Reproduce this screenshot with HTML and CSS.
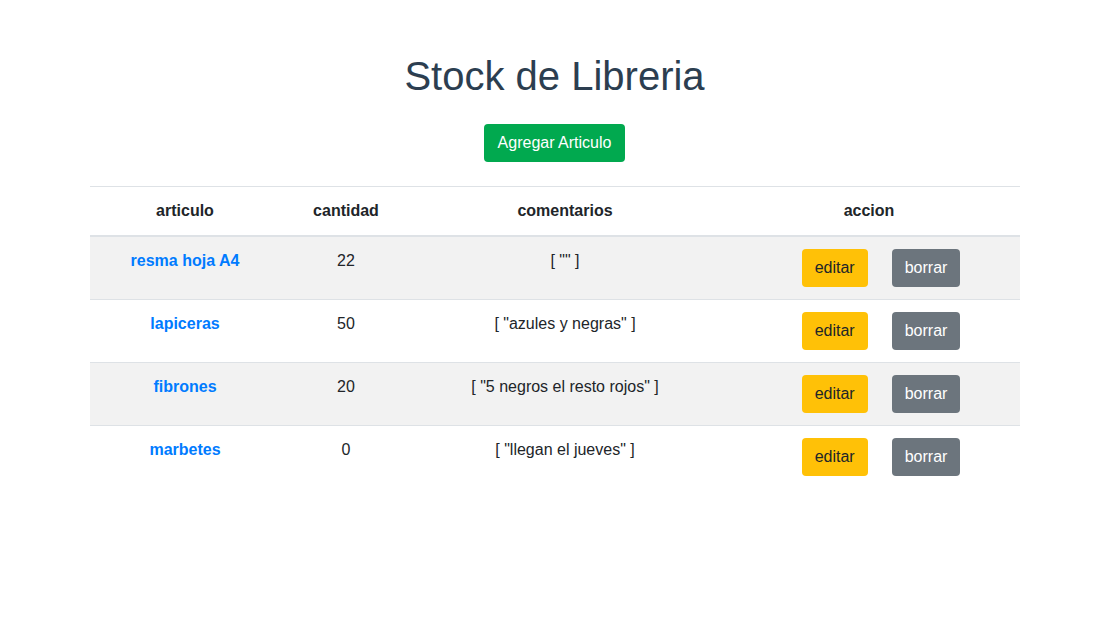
FILE: index.html
```html
<!DOCTYPE html>
<html lang="es">
<head>
<meta charset="utf-8">
<title>Stock de Libreria</title>
<link rel="stylesheet" href="styles.css">
</head>
<body>
<div class="app">
  <h1 class="title">Stock de Libreria</h1>
  <div class="add-wrap"><button class="btn btn-add">Agregar Articulo</button></div>
  <table class="stock">
    <thead>
      <tr><th class="c1">articulo</th><th class="c2">cantidad</th><th class="c3">comentarios</th><th class="c4">accion</th></tr>
    </thead>
    <tbody>
      <tr class="odd"><td class="name">resma hoja A4</td><td>22</td><td>[ "" ]</td><td class="act"><button class="btn btn-edit">editar</button><button class="btn btn-del">borrar</button></td></tr>
      <tr><td class="name">lapiceras</td><td>50</td><td>[ "azules y negras" ]</td><td class="act"><button class="btn btn-edit">editar</button><button class="btn btn-del">borrar</button></td></tr>
      <tr class="odd"><td class="name">fibrones</td><td>20</td><td>[ "5 negros el resto rojos" ]</td><td class="act"><button class="btn btn-edit">editar</button><button class="btn btn-del">borrar</button></td></tr>
      <tr><td class="name">marbetes</td><td>0</td><td>[ "llegan el jueves" ]</td><td class="act"><button class="btn btn-edit">editar</button><button class="btn btn-del">borrar</button></td></tr>
    </tbody>
  </table>
</div>
</body>
</html>
```
FILE: styles.css
```css
html, body {
  margin: 0;
  padding: 0;
  background: #fff;
}
body {
  font-family: "Liberation Sans", Arial, Helvetica, sans-serif;
  font-size: 16px;
  line-height: 1.5;
  color: #212529;
}
.app {
  padding: 52px 90px 0;
  text-align: center;
}
.title {
  margin: 0;
  padding-right: 6px;
  font-size: 40px;
  font-weight: 400;
  line-height: 1.2;
  color: #2c3e50;
}
.add-wrap {
  margin-top: 24px;
  padding-right: 6px;
  display: flex;
  justify-content: center;
}
.btn {
  font-family: inherit;
  font-size: 16px;
  line-height: 24px;
  padding: 6px 12px;
  border: 1px solid transparent;
  border-radius: 4px;
  cursor: pointer;
}
.btn-add {
  background: #01a94f;
  color: #fff;
  padding: 6px 13px;
}
.stock {
  margin-top: 24px;
  width: 930px;
  border-collapse: collapse;
}
.stock th, .stock td {
  padding: 12px;
  border-top: 1px solid #dee2e6;
  vertical-align: top;
  text-align: center;
}
.stock th {
  font-weight: 700;
  border-bottom: 2px solid #dee2e6;
}
.c1 { width: 166px; }
.c2 { width: 108px; }
.c3 { width: 282px; }
.c4 { width: 278px; }
.stock tr.odd td { background: #f2f2f2; }
.name {
  font-weight: 700;
  color: #007bff;
}
.act { white-space: nowrap; }
.act .btn { margin-left: 24px; }
.btn-edit {
  background: #ffc107;
  color: #212529;
}
.btn-del {
  background: #6c757d;
  color: #fff;
}
```
